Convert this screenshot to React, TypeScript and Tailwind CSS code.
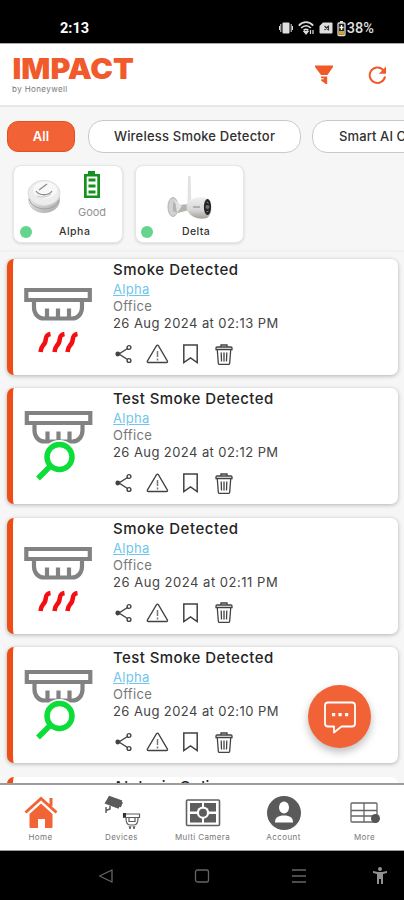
import React from "react";

type Event = { title: string; time: string; kind: "smoke" | "test" };

const events: Event[] = [
  { title: "Smoke Detected", time: "02:13", kind: "smoke" },
  { title: "Test Smoke Detected", time: "02:12", kind: "test" },
  { title: "Smoke Detected", time: "02:11", kind: "smoke" },
  { title: "Test Smoke Detected", time: "02:10", kind: "test" },
];

function StatusBar() {
  return (
    <div className="flex h-[43px] shrink-0 items-start bg-black pt-[19px] pr-[30px] pl-[60px] font-['Roboto',sans-serif] text-white">
      <span className="text-[14.500px] leading-[19px] font-bold">2:13</span>
      <div className="ml-auto flex items-center text-[#dedede]">
        <svg width="14" height="16" viewBox="0 0 14 16" fill="currentColor">
          <rect x="3.500" y="2.500" width="7" height="11" rx="1" />
          <path d="M1.800 4v8M12.200 4v8M.5 6v4M13.500 6v4" stroke="currentColor" strokeWidth="1" />
        </svg>
        <svg className="ml-[5px]" width="17" height="16" viewBox="0 0 17 16" fill="none" stroke="currentColor" strokeWidth="1.700">
          <path d="M.8 5.600C5 1 11 1 15.200 5.600M3.200 8c3-3 6.700-3 9.600 0M5.600 10.400c1.600-1.500 3.200-1.500 4.800 0" />
          <path d="M8 14l-2-2.500h4zM12.500 10v4M15 10v4" strokeWidth="1.200" fill="currentColor" />
        </svg>
        <svg className="ml-[4px]" width="15" height="16" viewBox="0 0 15 16">
          <path d="M4 2.500h8.500a1 1 0 0 1 1 1v9a1 1 0 0 1-1 1h-11a1 1 0 0 1-1-1V6z" fill="currentColor" />
          <path d="M5.500 6l4 4M9.500 6l-4 4M9.500 5.500v5" stroke="#333" strokeWidth="1.200" />
        </svg>
        <svg className="ml-[3px]" width="9" height="17" viewBox="0 0 9 17">
          <rect x="1" y="3" width="7" height="12.500" rx="1" fill="#222" stroke="currentColor" strokeWidth="1.300" />
          <rect x="3" y="1" width="3" height="2" fill="currentColor" />
          <path d="M2 11h5v3.700H2z" fill="#d8a12c" />
          <path d="M4.500 5v5M2.500 7.500h4" stroke="#fff" strokeWidth="1.300" />
        </svg>
        <span className="ml-[1px] pt-[2px] text-[14.500px] leading-[16px] font-medium">38%</span>
      </div>
    </div>
  );
}

function Header() {
  return (
    <header className="flex h-[64px] shrink-0 justify-between border-t border-b-2 border-t-[#aaa] border-b-[#e7e7e7] bg-white pl-3">
      <div className="pt-[10px]">
        <svg width="123" height="27" viewBox="0 0 123 27" className="block overflow-visible">
          <text x="0.500" y="24.500" textLength="121.500" lengthAdjust="spacingAndGlyphs" fill="#f15a2b" fontFamily="Inter, sans-serif" fontWeight="900" fontSize="29">IMPACT</text>
        </svg>
        <div className="pt-[1px] text-[8px] leading-[14px] tracking-[0.400px] text-[#777]">by Honeywell</div>
      </div>
      <div className="flex pt-[21px] pr-[16px] text-[#f05a28]">
        <svg width="19" height="21" viewBox="0 0 19 21" fill="currentColor">
          <path d="M0 .5h18v1.500L12.500 10H6L0 2zM6 11.500h6.200V19h-1.500l-1.500-1.300-3-2v-1.500h2.500v-1H6z" />
        </svg>
        <svg className="ml-[34px]" width="20" height="21" viewBox="0 0 20 21" fill="none" stroke="currentColor" strokeWidth="2">
          <path d="M17 11.500A7.700 7.700 0 1 1 14.800 4.700l2 2" />
          <path d="M18 1.500v7.200h-7.200z" fill="currentColor" stroke="none" />
        </svg>
      </div>
    </header>
  );
}

function SmokePuck() {
  return (
    <svg width="34" height="36" viewBox="0 0 34 36">
      <defs>
        <linearGradient id="puck" x2="1" y2="1">
          <stop stopColor="#f5f5f5" />
          <stop offset="1" stopColor="#a6a6a6" />
        </linearGradient>
      </defs>
      <path d="M1 14v7c0 7 7 13 16 13s16-6 16-13v-7z" fill="url(#puck)" />
      <path d="M2 20c3 12 26 14 30 1" fill="none" stroke="#a0a0a0" />
      <ellipse cx="17" cy="14" rx="16" ry="12.500" fill="#ececec" stroke="#dcdcdc" />
      <ellipse cx="18" cy="11" rx="12" ry="8.500" fill="#f8f8f8" />
      <path d="M12 11l8-6M9 12c3 5 13 5 16 0" fill="none" stroke="#8c8c8c" strokeWidth="1.300" />
      <path d="M10 17c5 2 11 1 14-2" fill="none" stroke="#c4c4c4" />
    </svg>
  );
}

function Camera() {
  return (
    <svg width="46" height="45" viewBox="0 0 46 45">
      <defs>
        <linearGradient id="body" x2="0" y2="1">
          <stop stopColor="#f0f0f0" />
          <stop offset="0.600" stopColor="#d8d6d4" />
          <stop offset="1" stopColor="#a39e98" />
        </linearGradient>
      </defs>
      <path d="M21 1h2.600l.7 29h-3.800z" fill="#e2e2e2" />
      <ellipse cx="6" cy="32" rx="5" ry="9.500" fill="#d3d2d0" stroke="#b5b3b0" />
      <path d="M6 27l6 3 10-1v6l-11 3-5-2z" fill="#b5b2af" />
      <path d="M8 25l7 6-5 7" fill="#e2e2e1" />
      <path d="M21 26c5-3 12-5 19-3 6 4 6 16 0 20-8 2-15-1-18-5-3-3-3-8-1-12z" fill="url(#body)" />
      <ellipse cx="40.500" cy="32" rx="3.600" ry="8" fill="#242424" />
      <circle cx="40.500" cy="32" r="2" fill="#746d6c" />
      <path d="M39.500 27l2 1M39.500 37l2-1M26 32h7" stroke="#858585" />
    </svg>
  );
}

function Devices() {
  return (
    <section className="flex h-[145px] shrink-0 flex-col overflow-hidden border-b-2 border-[#f1f1f1] bg-[#f6f6f6]">
      <div className="flex pt-[13px] pl-[7px] text-[13px] font-medium text-[#303030]">
        <div className="mt-[1px] flex h-[31px] w-[68px] shrink-0 items-center justify-center rounded-[11px] border border-[#e95019] bg-[#f16236] font-semibold text-white">All</div>
        <div className="ml-[13px] flex h-[33px] w-[213px] shrink-0 items-center justify-center rounded-[15px] border border-[#c9c9c9] bg-white tracking-[0.200px] whitespace-nowrap">Wireless Smoke Detector</div>
        <div className="ml-[11px] flex h-[33px] w-[170px] shrink-0 items-center rounded-[15px] border border-[#c9c9c9] bg-white pl-[26px] tracking-[0.100px] whitespace-nowrap">Smart AI Camera</div>
      </div>
      <div className="flex gap-[12px] pt-[12px] pl-[13px]">
        <div className="flex h-[78px] w-[110px] flex-col rounded-[8px] border border-[#e6e6e6] bg-white shadow-[0_1px_3px_#00000022]">
          <div className="flex h-[57px] pt-[4px] pl-[13px]">
            <div className="pt-[9px]"><SmokePuck /></div>
            <div className="flex w-[44px] flex-col items-center pl-[18px]">
              <svg className="shrink-0" width="18" height="29" viewBox="0 0 18 29" fill="#15921d">
                <path fillRule="evenodd" d="M5 1h7v3h5v24H1V4h4zM3.700 6.500v19h10.600v-19z" />
                <path d="M5.500 8.500h7v3h-7zM5.500 14.500h7v3h-7zM5.500 20.500h7v3h-7z" />
              </svg>
              <span className="mt-[6px] text-[11px] leading-[14px] text-[#929292]">Good</span>
            </div>
          </div>
          <div className="flex items-center pl-[6px]">
            <span className="size-[12px] rounded-full bg-[#65d58d]" />
            <span className="ml-[27px] text-[10.500px] leading-[18px] font-medium tracking-[0.500px] text-[#333]">Alpha</span>
          </div>
        </div>
        <div className="flex h-[78px] w-[109px] flex-col rounded-[8px] border border-[#e6e6e6] bg-white shadow-[0_1px_3px_#00000022]">
          <div className="h-[57px] pt-[9px] pl-[31px]"><Camera /></div>
          <div className="flex items-center pl-[5px]">
            <span className="size-[12px] rounded-full bg-[#65d58d]" />
            <span className="ml-[29px] text-[10.500px] leading-[18px] font-medium tracking-[0.400px] text-[#333]">Delta</span>
          </div>
        </div>
      </div>
    </section>
  );
}

function DetectorIcon({ kind }: { kind: Event["kind"] }) {
  return (
    <svg className="block overflow-visible" width="70" height="72" viewBox="0 0 70 72" fill="none">
      <g stroke="#828282" strokeWidth="4.200" transform={kind === "test" ? "translate(0.500 -6)" : undefined}>
        <path d="M3.300 7h63.500v10H3.300z" />
        <path d="M11 17v7.500c0 6 4 11 10 11h28c6 0 10-5 10-11V17M24 35.500V25.500M35 35.500V25.500M46 35.500V25.500" />
      </g>
      {kind === "smoke" ? (
        <path d="M27.500 51c-6.500 1-3.500 5.500-6 9.500-1.500 2.500-3.500 2.500-4 8.500M41.500 51c-6.500 1-3.500 5.500-6 9.500-1.500 2.500-3.500 2.500-4 8.500M54.500 51c-6.500 1-3.500 5.500-6 9.500-1.500 2.500-3.500 2.500-4 8.500" stroke="#f40e12" strokeWidth="4.600" />
      ) : (
        <>
          <circle cx="36.500" cy="45" r="17" fill="#fff" />
          <circle cx="36.500" cy="45" r="12.500" fill="#fff" stroke="#0ddd39" strokeWidth="5.500" />
          <path d="M27.500 54L15 66.500" stroke="#0ddd39" strokeWidth="5.500" />
        </>
      )}
    </svg>
  );
}

function Actions() {
  return (
    <div className="flex h-[24px] items-center text-[#424242]">
      <svg className="ml-[2px]" width="18" height="20" viewBox="0 0 18 20" fill="none" stroke="currentColor" strokeWidth="1.400">
        <path d="M12.500 4.500L4 10l8.500 5.500" />
        <circle cx="2.800" cy="10" r="1.700" fill="currentColor" />
        <circle cx="14" cy="3.500" r="1.900" />
        <circle cx="14" cy="16.500" r="1.900" />
      </svg>
      <svg className="ml-[13px]" width="23" height="20" viewBox="0 0 23 20" fill="none" stroke="currentColor" strokeWidth="1.300">
        <path d="M10.400 1.800L1.500 16.800c-.6 1-.2 1.700.8 1.700h18.200c1 0 1.400-.7.8-1.700L12.500 1.800c-.6-.9-1.500-.9-2.100 0z" />
        <path d="M11.500 7v6M11.500 14.500v2" strokeWidth="1.500" stroke="#777" />
      </svg>
      <svg className="ml-[13px]" width="17" height="20" viewBox="0 0 17 20" fill="none" stroke="currentColor" strokeWidth="1.500">
        <path d="M1.800 1h13.400v17.500l-6.700-4.500-6.700 4.500z" />
      </svg>
      <svg className="ml-[16px]" width="18" height="21" viewBox="0 0 18 21" fill="none" stroke="currentColor" strokeWidth="1.300">
        <path d="M1 5.500h16V4c0-.8-.5-1-1-1H2c-.7 0-1 .5-1 1zM6 3V1h6v2M2.300 6l1 13c0 1 .5 1.500 1.500 1.500h8.400c1 0 1.500-.5 1.500-1.500l1-13M6.200 8.500l.3 9M9 8.500v9M11.800 8.500l-.3 9" />
      </svg>
    </div>
  );
}

function EventCard({ event }: { event: Event }) {
  return (
    <article className="flex h-[116px] w-[391px] shrink-0 overflow-hidden rounded-[7px] border-l-[6px] border-[#ee4d16] bg-white shadow-[0_1px_4px_#00000048]">
      <div className="w-[100px] shrink-0 pt-[24px] pl-[10px]"><DetectorIcon kind={event.kind} /></div>
      <div className="flex flex-col whitespace-nowrap">
        <h2 className={`pt-px text-[15px] leading-[20px] font-medium text-[#252525] ${event.kind === "smoke" ? "tracking-[0.540px]" : "tracking-[0.420px]"}`}>{event.title}</h2>
        <a className="text-[13px] leading-[18px] tracking-[0.300px] text-[#6fc5eb] underline">Alpha</a>
        <span className="text-[13px] leading-[17px] tracking-[0.300px] text-[#777]">Office</span>
        <span className={`mb-[10px] text-[13px] leading-[17px] text-[#444] ${event.time === "02:11" ? "tracking-[0.520px]" : "tracking-[0.420px]"}`}>26 Aug 2024 at {event.time} PM</span>
        <Actions />
      </div>
    </article>
  );
}

function NavIcon({ name }: { name: string }) {
  if (name === "Home")
    return (
      <svg width="36" height="36" viewBox="0 0 36 36" fill="#f16435">
        <path d="M6.500 20L18 9.500 29.500 20v13a1 1 0 0 1-1 1H22v-9h-7v9H7.500a1 1 0 0 1-1-1z" />
        <path d="M2.500 18.500L18 4.500l15.500 14M27.500 12V4" fill="none" stroke="#fff" strokeWidth="5.500" />
        <path d="M2.500 18.500L18 4.500l15.500 14M28 12V4" fill="none" stroke="#f16435" strokeWidth="3" />
      </svg>
    );
  if (name === "Devices")
    return (
      <svg width="38" height="36" viewBox="0 0 38 36" fill="none" stroke="#5d5d5d">
        <path d="M6.500 3l11.500 4-3 6.500-12-4.500zM19 8l-2 5" fill="#5a5a5a" stroke="#5a5a5a" strokeWidth="2" />
        <path d="M3 13v6M3 16.500l4-1.500v-3" strokeWidth="1.500" />
        <g transform="translate(1 0)">
          <path d="M19.500 20h16v3.500h-16zM22 24c0 6 2 7 4 7h4c2 0 4-1 4-7M25 24v3.500h6V24" strokeWidth="1.200" />
          <path d="M25 32l1 3 1-3M29 32l1 3 1-3" strokeWidth="1" />
          <path d="M19 19h3v4h-3z" fill="#333" stroke="none" />
        </g>
      </svg>
    );
  if (name === "Multi Camera")
    return (
      <svg width="36" height="36" viewBox="0 0 36 36" fill="none" stroke="#606060">
        <rect x="1.500" y="6" width="33" height="25.500" rx="1" strokeWidth="1.600" fill="#fff" />
        <path d="M5 9h12v8.500H5zM19 9h12v8.500H19zM5 20h12v8.500H5zM19 20h12v8.500H19z" fill="#5d5d5d" stroke="none" />
        <circle cx="18" cy="18.700" r="6.200" fill="#fff" stroke="none" />
        <circle cx="18" cy="18.700" r="4" fill="#5d5d5d" stroke="none" />
      </svg>
    );
  if (name === "Account")
    return (
      <svg width="36" height="36" viewBox="0 0 36 36">
        <circle cx="18" cy="19" r="17" fill="#5a5a5a" />
        <ellipse cx="18" cy="13.500" rx="5" ry="6" fill="#fff" />
        <path d="M9 28.500c0-5 3-7 9-7s9 2 9 7z" fill="#fff" />
      </svg>
    );
  return (
    <svg width="36" height="36" viewBox="0 0 36 36" fill="none" stroke="#666" strokeWidth="1.300">
      <rect x="4" y="9" width="26" height="19" rx="1" />
      <path d="M4 16.500h26M4 22h26M17 9v19" />
      <circle cx="28.500" cy="24.500" r="4.500" fill="#555" stroke="none" />
    </svg>
  );
}

function BottomNav() {
  return (
    <nav className="flex h-[68px] shrink-0 border-t-2 border-b border-[#9c9c9c] bg-white">
      {["Home", "Devices", "Multi Camera", "Account", "More"].map((name) => (
        <div key={name} className="flex w-[81px] shrink-0 flex-col items-center pt-[9px] text-[8px] leading-[11px] tracking-[0.400px] whitespace-nowrap text-[#777]">
          <NavIcon name={name} />
          <span className="mt-[2px]">{name}</span>
        </div>
      ))}
    </nav>
  );
}

function SystemNav() {
  return (
    <div className="flex h-[49px] shrink-0 items-center bg-black text-[#656565]">
      <svg className="ml-[98px]" width="16" height="16" viewBox="0 0 16 16" fill="none" stroke="currentColor" strokeWidth="1.300"><path d="M14 2v12L1.500 8z" strokeLinejoin="round" /></svg>
      <svg className="ml-[80px]" width="16" height="16" viewBox="0 0 16 16" fill="none" stroke="currentColor" strokeWidth="1.300"><rect x="1.500" y="2" width="13" height="12" rx="2" /></svg>
      <svg className="ml-[81px]" width="16" height="16" viewBox="0 0 16 16" fill="none" stroke="currentColor" strokeWidth="1.400"><path d="M1 2h14M1 8h14M1 14h14" /></svg>
      <svg className="ml-[66px]" width="16" height="18" viewBox="0 0 16 18" fill="#929292"><circle cx="7" cy="2" r="2" /><path d="M0 4l5 1h4l5-1v2l-4 1v10H8v-5H6v5H4V7L0 6z" /></svg>
    </div>
  );
}

export default function App() {
  return (
    <div className="relative flex h-[900px] w-[404px] flex-col overflow-hidden bg-[#f6f6f6] font-['Inter',sans-serif]">
      <StatusBar />
      <Header />
      <Devices />
      <main className="flex h-[531px] shrink-0 flex-col gap-[13.400px] overflow-hidden pt-[7px] pl-[7px]">
        {events.map((event) => <EventCard key={event.time} event={event} />)}
        <article className="h-[116px] w-[391px] shrink-0 overflow-hidden rounded-[7px] border-l-[6px] border-[#ee4d16] bg-white pl-[100px]">
          <h2 className="text-[15px] leading-[20px] font-medium tracking-[0.600px] text-[#252525]">Alpha is Online</h2>
        </article>
      </main>
      <BottomNav />
      <SystemNav />
      <button className="absolute top-[685px] left-[308px] flex size-[63px] items-center justify-center rounded-full bg-[#f16236] shadow-[0_4px_8px_#00000045]">
        <svg width="34" height="34" viewBox="0 0 34 34" fill="none" stroke="#fff" strokeWidth="1.800">
          <path d="M5 2.500h24c2 0 3 1 3 3v18c0 2-1 3-3 3H18.500l-7.500 6v-6H5c-2 0-3-1-3-3v-18c0-2 1-3 3-3z" strokeLinejoin="round" />
          <path d="M9 13h3.200v3.200H9zM15.500 13h3.200v3.200h-3.200zM22 13h3.200v3.200H22z" fill="#fff" stroke="none" />
        </svg>
      </button>
    </div>
  );
}
